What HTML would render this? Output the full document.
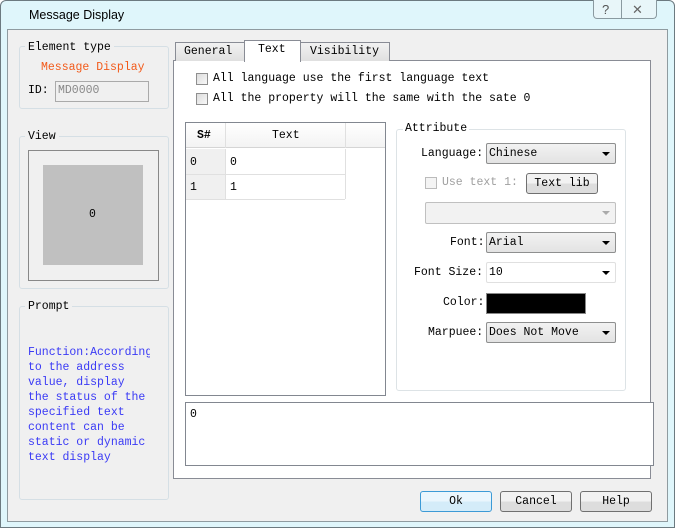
<!DOCTYPE html><html><head><style>
body{margin:0;width:675px;height:528px;overflow:hidden;background:#fff;font-family:"Liberation Mono",monospace;font-size:11.5px;color:#000}
.a{position:absolute;box-sizing:border-box}
.t{position:absolute;white-space:pre;line-height:16px}
.grp{position:absolute;box-sizing:border-box;border:1px solid #d5dfe5;border-radius:3px}
.lbl{position:absolute;background:#f0f0f0;padding:0 3px;white-space:pre;line-height:15px}
.cmb{position:absolute;box-sizing:border-box;border:1px solid #8e8f8f;border-radius:2px;background:linear-gradient(#f2f2f2,#e3e3e3);height:21px;line-height:20px;padding-left:2px;white-space:pre}
.cmb:after{content:"";position:absolute;right:5px;top:8px;border-left:4px solid transparent;border-right:4px solid transparent;border-top:4px solid #000}
.btn{position:absolute;box-sizing:border-box;border:1px solid #707070;border-radius:3px;background:linear-gradient(#f2f2f2 50%,#dddddd 50%);text-align:center;line-height:19px;height:21px}
.cb{position:absolute;width:12px;height:12px;box-sizing:border-box;border:1px solid #8f8f8f;background:linear-gradient(135deg,#dcdcdc,#f8f8f8)}
</style></head><body>
<div class="a" style="left:0;top:0;width:675px;height:528px;background:#dff6fb;border:1px solid #6c7a80;border-radius:6px 6px 0 0"></div>
<div class="t" style="left:29px;top:8px;font-family:'Liberation Sans',sans-serif;font-size:12.5px;line-height:15px">Message Display</div>
<div class="a" style="left:593px;top:0;width:64px;height:19px;border:1px solid #8a9aa0;border-top:none;border-radius:0 0 4px 4px;background:#e8f6f9"></div>
<div class="a" style="left:621px;top:0;width:1px;height:19px;background:#8a9aa0"></div>
<div class="t" style="left:602px;top:2px;color:#555;font-family:'Liberation Sans';font-size:13px;line-height:15px">?</div>
<div class="t" style="left:632px;top:2px;color:#666;font-family:'Liberation Sans';font-size:13px;line-height:15px">✕</div>
<div class="a" style="left:7px;top:29px;width:661px;height:493px;background:#f0f0f0;border:1px solid #8f9ba0"></div>

<div class="grp" style="left:19px;top:46px;width:150px;height:63px"></div>
<div class="lbl" style="left:25px;top:40px">Element type</div>
<div class="t" style="left:41px;top:60px;color:#f25a1a">Message Display</div>
<div class="t" style="left:28px;top:83px">ID:</div>
<div class="a" style="left:55px;top:81px;width:94px;height:21px;border:1px solid #aaa;background:#f0f0f0"></div>
<div class="t" style="left:58px;top:83px;color:#888">MD0000</div>

<div class="grp" style="left:19px;top:136px;width:150px;height:153px"></div>
<div class="lbl" style="left:25px;top:129px">View</div>
<div class="a" style="left:28px;top:150px;width:131px;height:131px;border:1px solid #888;background:#f0f0f0"></div>
<div class="a" style="left:43px;top:165px;width:100px;height:100px;background:#c0c0c0"></div>
<div class="t" style="left:89px;top:207px">0</div>

<div class="grp" style="left:19px;top:306px;width:150px;height:194px"></div>
<div class="lbl" style="left:25px;top:299px">Prompt</div>
<div class="t" style="left:28px;top:345px;color:#3a3af5;line-height:15px;width:122px;overflow:hidden">Function:According
to the address
value, display
the status of the
specified text
content can be
static or dynamic
text display</div>

<div class="a" style="left:173px;top:60px;width:478px;height:419px;background:#fff;border:1px solid #898c95"></div>
<div class="a" style="left:175px;top:42px;width:70px;height:19px;border:1px solid #898c95;border-bottom:none;background:linear-gradient(#f2f2f2,#e0e0e0)"></div>
<div class="t" style="left:184px;top:44px">General</div>
<div class="a" style="left:300px;top:42px;width:90px;height:19px;border:1px solid #898c95;border-bottom:none;background:linear-gradient(#f2f2f2,#e0e0e0)"></div>
<div class="t" style="left:310px;top:44px">Visibility</div>
<div class="a" style="left:244px;top:40px;width:57px;height:22px;border:1px solid #898c95;border-bottom:none;background:#fff"></div>
<div class="t" style="left:258px;top:42px">Text</div>

<div class="cb" style="left:196px;top:73px"></div>
<div class="t" style="left:213px;top:71px">All language use the first language text</div>
<div class="cb" style="left:196px;top:93px"></div>
<div class="t" style="left:213px;top:91px">All the property will the same with the sate 0</div>

<div class="a" style="left:185px;top:122px;width:201px;height:274px;border:1px solid #828790;background:#fff"></div>
<div class="a" style="left:186px;top:123px;width:199px;height:25px;background:linear-gradient(#fff,#f3f3f3);border-bottom:1px solid #d5d5d5"></div>
<div class="a" style="left:225px;top:123px;width:1px;height:25px;background:#e0e0e0"></div>
<div class="a" style="left:345px;top:123px;width:1px;height:25px;background:#e0e0e0"></div>
<div class="t" style="left:197px;top:128px;font-weight:bold">S#</div>
<div class="t" style="left:272px;top:128px">Text</div>
<div class="a" style="left:186px;top:149px;width:39px;height:50px;background:#f0f0f0"></div>
<div class="a" style="left:186px;top:174px;width:159px;height:1px;background:#e0e0e0"></div>
<div class="a" style="left:186px;top:199px;width:159px;height:1px;background:#e0e0e0"></div>
<div class="a" style="left:225px;top:149px;width:1px;height:50px;background:#e0e0e0"></div>
<div class="a" style="left:345px;top:149px;width:1px;height:50px;background:#e0e0e0"></div>
<div class="t" style="left:190px;top:155px">0</div><div class="t" style="left:230px;top:155px">0</div>
<div class="t" style="left:190px;top:180px">1</div><div class="t" style="left:230px;top:180px">1</div>

<div class="grp" style="left:396px;top:129px;width:230px;height:262px;border-color:#dde3e6"></div>
<div class="t" style="left:403px;top:121px;background:#fff;padding:0 2px">Attribute</div>
<div class="t" style="left:421px;top:146px">Language:</div>
<div class="cmb" style="left:486px;top:143px;width:130px">Chinese</div>
<div class="cb" style="left:425px;top:177px;border-color:#bbb;background:#f4f4f4"></div>
<div class="t" style="left:442px;top:175px;color:#a0a0a0">Use text 1:</div>
<div class="btn" style="left:526px;top:173px;width:72px">Text lib</div>
<div class="a" style="left:425px;top:202px;width:191px;height:22px;border:1px solid #c0c0c0;border-radius:2px;background:#f2f2f2"></div>
<div class="a" style="left:602px;top:211px;border-left:4px solid transparent;border-right:4px solid transparent;border-top:4px solid #aaa;width:0;height:0"></div>
<div class="t" style="left:450px;top:235px">Font:</div>
<div class="cmb" style="left:486px;top:232px;width:130px">Arial</div>
<div class="t" style="left:414px;top:265px">Font Size:</div>
<div class="cmb" style="left:486px;top:262px;width:130px;background:#fff;border-color:#e0e0e0">10</div>
<div class="t" style="left:443px;top:295px">Color:</div>
<div class="a" style="left:486px;top:293px;width:100px;height:21px;background:#000;border:1px solid #888"></div>
<div class="t" style="left:428px;top:325px">Marpuee:</div>
<div class="cmb" style="left:486px;top:322px;width:130px">Does Not Move</div>

<div class="a" style="left:185px;top:402px;width:469px;height:64px;border:1px solid #828790;background:#fff"></div>
<div class="t" style="left:190px;top:407px">0</div>

<div class="btn" style="left:420px;top:491px;width:72px;border-color:#3c9ad6;background:linear-gradient(#eaf6fd 50%,#d4ecf9 50%)">Ok</div>
<div class="btn" style="left:500px;top:491px;width:72px">Cancel</div>
<div class="btn" style="left:580px;top:491px;width:72px">Help</div>
</body></html>
